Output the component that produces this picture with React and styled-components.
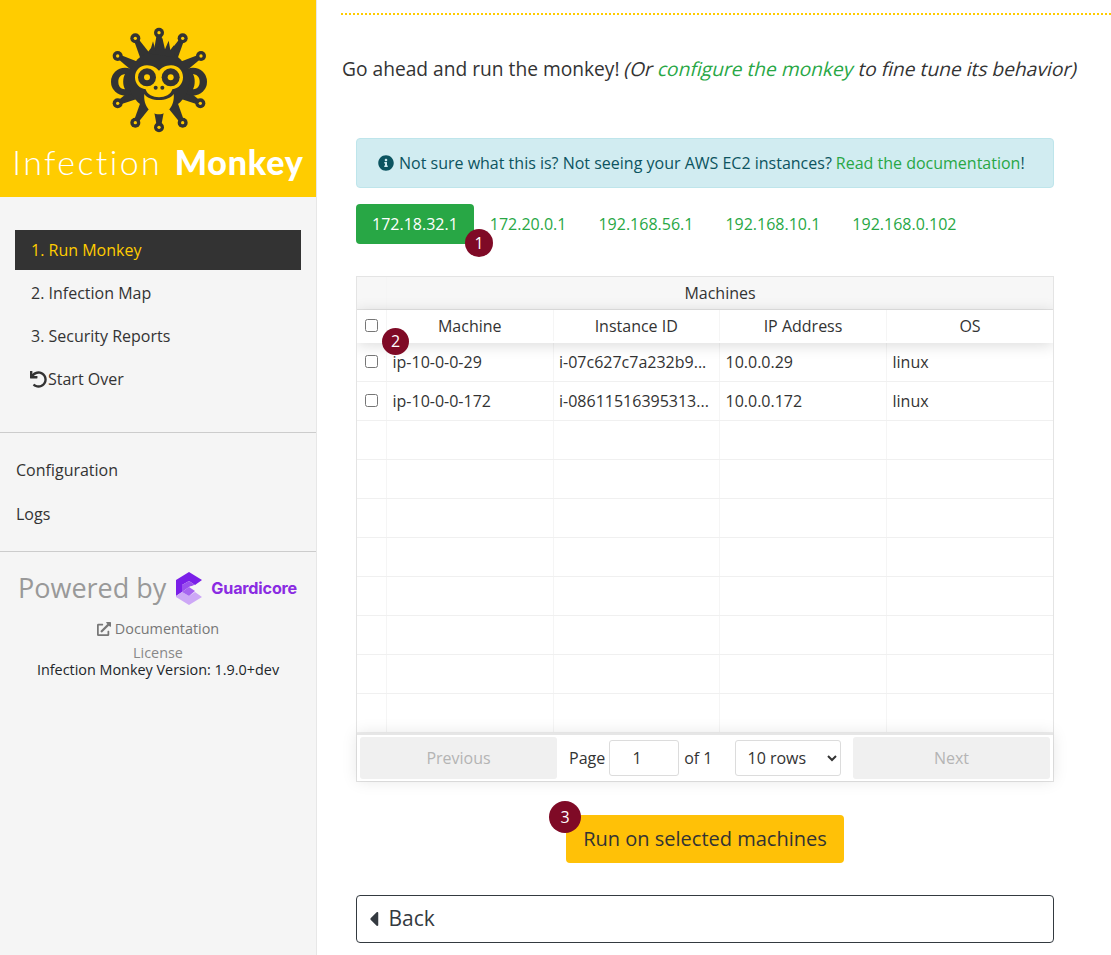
import React from "react";
import styled, { createGlobalStyle } from "styled-components";
import { FaCaretLeft, FaExternalLinkAlt, FaInfoCircle, FaUndo } from "react-icons/fa";

const GlobalStyle = createGlobalStyle`
  html, body {
    margin: 0;
    padding: 0;
    background: #fff;
    overflow: hidden;
  }
  body {
    font-family: "Open Sans", "Liberation Sans", sans-serif;
    font-size: 16px;
    line-height: 1.5;
    color: #212529;
  }
  * {
    box-sizing: border-box;
  }
`;

const Page = styled.div`
  width: 1111px;
  height: 955px;
  display: flex;
  overflow: hidden;
`;

const Sidebar = styled.aside`
  width: 317px;
  flex: none;
  background: #f5f5f5;
  border-right: 1px solid #e7e7e7;
  display: flex;
  flex-direction: column;
`;

const LogoPanel = styled.div`
  height: 197px;
  background: #ffcc00;
  display: flex;
  flex-direction: column;
  align-items: center;
  padding-top: 20px;
`;

const LogoText = styled.div`
  font-family: "Lato", "Open Sans", sans-serif;
  font-size: 34px;
  line-height: 40px;
  letter-spacing: 2.35px;
  margin-top: 2px;
  color: #fff;
  font-weight: 300;
  white-space: nowrap;

  b {
    font-weight: 900;
    letter-spacing: 0.8px;
    margin-left: 1px;
  }
`;

const Nav = styled.ul`
  list-style: none;
  margin: 33px 0 0 15px;
  padding: 0;
  width: 286px;
`;

const NavItem = styled.li`
  height: 40px;
  margin-bottom: 3px;
  padding-left: 16px;
  display: flex;
  align-items: center;
  background: ${(p) => (p.$active ? "#333" : "transparent")};
  color: ${(p) => (p.$active ? "#ffcc00" : "#333")};
`;

const UndoIcon = styled(FaUndo)`
  width: 17px;
  height: 17px;
  margin: 0 1px 0 -1px;
  color: #333;
`;

const Rule = styled.hr`
  border: 0;
  border-top: 1px solid #ccc;
  margin: ${(p) => p.$margin};
  width: 100%;
`;

const SideLink = styled.div`
  padding-left: 16px;
  height: 44px;
  display: flex;
  align-items: center;
  color: #333;
`;

const Powered = styled.div`
  margin-top: 13px;
  display: flex;
  align-items: center;
  padding-left: 18px;
  height: 46px;
  font-size: 27px;
  color: #999;
  white-space: nowrap;
`;

const GuardMark = styled.svg`
  width: 28px;
  height: 33px;
  margin-left: 9px;
  flex: none;
`;

const GuardName = styled.span`
  font-family: "Inter", "Open Sans", sans-serif;
  font-size: 16.2px;
  font-weight: 700;
  color: #8a2be2;
  margin-left: 8px;
  letter-spacing: -0.2px;
`;

const SideFooter = styled.div`
  text-align: center;
  font-size: 14.4px;
  line-height: 17px;
`;

const DocLink = styled.div`
  color: #777;
  margin-top: 7px;
  height: 26px;
  line-height: 22px;

  svg {
    width: 14px;
    height: 14px;
    vertical-align: -2px;
    margin-right: 4px;
    color: #777;
  }
`;

const License = styled.div`
  color: #888;
`;

const Main = styled.main`
  flex: 1;
  padding: 13px 0 0 24px;
  display: flex;
  flex-direction: column;
`;

const DottedRule = styled.div`
  border-top: 2px dotted #ffcc00;
  height: 2px;
`;

const Lead = styled.p`
  margin: 37px 0 0 1px;
  font-size: 19.2px;
  line-height: 34px;
  white-space: nowrap;
  color: #333;

  a {
    color: #28a745;
  }
`;

/* the reference slants the upright face instead of using the real italic */
const Slanted = styled.span`
  display: inline-block;
  transform: skewX(-14deg);
`;

const Content = styled.div`
  width: 698px;
  margin-left: 15px;
  display: flex;
  flex-direction: column;
`;

const Alert = styled.div`
  margin-top: 52px;
  height: 50px;
  background: #d1ecf1;
  border: 1px solid #bee5eb;
  border-radius: 4px;
  color: #0c5460;
  display: flex;
  align-items: center;
  padding-left: 21px;
  white-space: nowrap;

  svg {
    width: 16px;
    height: 16px;
    margin-right: 5px;
  }

  a {
    color: #28a745;
    margin-left: 4px;
  }
`;

const Tabs = styled.div`
  display: flex;
  margin-top: 16px;
  position: relative;
`;

const Tab = styled.div`
  height: 40px;
  padding: 0 16px;
  line-height: 40px;
  border-radius: 4px;
  background: ${(p) => (p.$active ? "#28a745" : "transparent")};
  color: ${(p) => (p.$active ? "#fff" : "#28a745")};
`;

const Badge = styled.span`
  position: absolute;
  left: ${(p) => p.$left}px;
  top: ${(p) => p.$top}px;
  width: ${(p) => p.$size}px;
  height: ${(p) => p.$size}px;
  border-radius: 50%;
  background: #7f0a26;
  color: #fff;
  font-size: 16px;
  line-height: ${(p) => p.$size}px;
  text-align: center;
  z-index: 3;
`;

const TableFrame = styled.div`
  margin-top: 32px;
  height: 506px;
  border: 1px solid #e4e4e4;
  display: flex;
  flex-direction: column;
  position: relative;
  font-size: 16px;
  color: #333;
`;

const TableBody = styled.div`
  flex: 1;
  min-height: 0;
  overflow: hidden;
  display: flex;
  flex-direction: column;
`;

const Row = styled.div`
  display: grid;
  grid-template-columns: 30px 166.5px 166.5px 167px 1fr;
  height: 39px;
  flex: none;
  border-bottom: 1px solid #f0f0f0;
`;

const GroupRow = styled(Row)`
  grid-template-columns: 30px 1fr;
  height: 33px;
  background: #f7f7f7;
  border-bottom: 1px solid #e4e4e4;
`;

const HeadRow = styled(Row)`
  height: 33px;
  border-bottom: 0;
  padding-bottom: 2px;
  box-shadow: 0 2px 15px rgba(0, 0, 0, 0.15);
  position: relative;
  z-index: 1;
  background: #fff;
`;

const Cell = styled.div`
  display: flex;
  align-items: center;
  padding: 0 ${(p) => (p.$center ? "0" : "5px 0 5.5px")};
  border-right: 1px solid #f5f5f5;
  justify-content: ${(p) => (p.$center ? "center" : "flex-start")};
  white-space: nowrap;
  overflow: hidden;

  &:last-child {
    border-right: 0;
  }
`;

const CheckCell = styled(Cell)`
  justify-content: center;
  padding: 0 1px 0 0;

  input {
    margin: 0 0 2px;
    width: 13px;
    height: 13px;
  }
`;

const HeadCheckCell = styled(CheckCell)`
  input {
    margin: 0;
  }
`;

const Pagination = styled.div`
  height: 48px;
  flex: none;
  background: #fff;
  display: flex;
  align-items: center;
  padding: 0 3px;
  box-shadow: 0 0 15px rgba(0, 0, 0, 0.1);
  border-top: 2px solid #e6e6e6;
  position: relative;
  z-index: 1;
`;

const PageButton = styled.div`
  width: 197px;
  height: 42px;
  flex: none;
  border-radius: 3px;
  background: #f0f0f0;
  color: #b4b4b4;
  text-align: center;
  line-height: 42px;
`;

const PageCenter = styled.div`
  flex: 1;
  display: flex;
  align-items: center;
  padding-left: 12px;
  white-space: nowrap;
`;

const PageInput = styled.input`
  width: 70px;
  height: 36px;
  margin: 0 5px 0 4px;
  border: 1px solid #dcdcdc;
  border-radius: 3px;
  font: inherit;
  color: #333;
  text-align: center;
  padding: 0 14px 0 0;
`;

const RowsSelect = styled.select`
  width: 106px;
  height: 36px;
  margin-left: 22px;
  border: 1px solid #dcdcdc;
  border-radius: 3px;
  background: #fff;
  font: inherit;
  color: #333;
  padding-left: 8px;
`;

const RunWrap = styled.div`
  display: flex;
  justify-content: center;
  margin-top: 33px;
`;

const RunButton = styled.div`
  position: relative;
  width: 278px;
  height: 48px;
  background: #ffc107;
  border-radius: 4px;
  font-size: 20px;
  line-height: 48px;
  text-align: center;
  color: #333;
`;

const BackButton = styled.div`
  margin-top: 32px;
  height: 48px;
  border: 1px solid #343a40;
  border-radius: 4px;
  display: flex;
  align-items: center;
  padding-left: 12px;
  font-size: 21px;
  color: #343a40;

  svg {
    width: 9.5px;
    height: 24px;
    margin-right: 10px;
  }
`;

const MonkeyLogo = () => {
  const cx = 204;
  const cy = 182;
  const arms = [
    [204, 38], [275, 55], [330, 108], [328, 250], [275, 308],
    [204, 322], [133, 308], [80, 250], [80, 108], [133, 55],
  ];
  return (
    <svg width="135" height="120" viewBox="0 0 405 360">
      {arms.map(([x, y]) => {
        const len = Math.hypot(x - cx, y - cy);
        const ux = (x - cx) / len;
        const uy = (y - cy) / len;
        const bx = cx + ux * 80;
        const by = cy + uy * 80;
        const pts = [
          [bx - uy * 17, by + ux * 17],
          [x - uy * 6, y + ux * 6],
          [x + uy * 6, y - ux * 6],
          [bx + uy * 17, by - ux * 17],
        ]
          .map((pt) => pt.join(","))
          .join(" ");
        return (
          <g key={x + "-" + y}>
            <polygon points={pts} fill="#333" />
            <circle cx={x} cy={y} r="15" fill="#333" />
            <circle cx={x} cy={y} r="5" fill="#ffcc00" />
          </g>
        );
      })}
      <circle cx="102" cy="185" r="42" fill="#333" />
      <circle cx="306" cy="185" r="42" fill="#333" />
      <path d="M102 162 C86 164 82 176 82 185 C82 196 86 206 102 208 C95 195 95 175 102 162Z" fill="#ffcc00" />
      <path d="M306 162 C322 164 326 176 326 185 C326 196 322 206 306 208 C313 195 313 175 306 162Z" fill="#ffcc00" />
      <circle cx="204" cy="182" r="91" fill="#333" />
      <polygon points="168,100 180,84 186,64 194,92 214,54 222,88 233,62 238,90 249,76 250,112" fill="#333" />
      <path
        d="M168 136 C186 136 197 145 204 152 C211 145 222 136 240 136 C262 136 276 152 276 172 C276 192 262 206 244 208 C240 224 222 232 204 232 C186 232 168 224 164 208 C146 206 132 192 132 172 C132 152 146 136 168 136Z"
        fill="#ffcc00"
      />
      <circle cx="168" cy="172" r="27" fill="#333" />
      <circle cx="239" cy="172" r="27" fill="#333" />
      <circle cx="168" cy="172" r="9" fill="#ffcc00" />
      <circle cx="239" cy="172" r="9" fill="#ffcc00" />
      <circle cx="194" cy="203" r="6" fill="#333" />
      <circle cx="214" cy="203" r="6" fill="#333" />
      <path d="M160 222 C176 246 232 246 248 222 C252 258 228 283 204 283 C180 283 156 258 160 222Z" fill="#ffcc00" />
    </svg>
  );
};

const GuardicoreMark = () => (
  <GuardMark viewBox="0 0 28 33">
    <polygon points="14,0 27,8 20,13 14,9 7,13 7,20 1,24 1,8" fill="#7a1fe8" />
    <polygon points="7,13 14,9 20,13 14,15 7,20" fill="#9a50ee" />
    <polygon points="14,15 20,13 27,16 20,19" fill="#f5f5f5" />
    <polygon points="1,24 7,20 14,24 20,20 27,25 14,33 1,25" fill="#cda8f6" />
    <polygon points="7,20 14,15 20,19 14,24" fill="#a665f0" />
  </GuardMark>
);

const ipList = ["172.18.32.1", "172.20.0.1", "192.168.56.1", "192.168.10.1", "192.168.0.102"];

const machines = [
  ["ip-10-0-0-29", "i-07c627c7a232b9...", "10.0.0.29", "linux"],
  ["ip-10-0-0-172", "i-08611516395313...", "10.0.0.172", "linux"],
];

const emptyRows = [0, 1, 2, 3, 4, 5, 6, 7];

export default function App() {
  return (
    <Page>
      <GlobalStyle />
      <Sidebar>
        <LogoPanel>
          <MonkeyLogo />
          <LogoText>
            Infection <b>Monkey</b>
          </LogoText>
        </LogoPanel>
        <Nav>
          <NavItem $active>1. Run Monkey</NavItem>
          <NavItem>2. Infection Map</NavItem>
          <NavItem>3. Security Reports</NavItem>
          <NavItem>
            <UndoIcon />
            Start Over
          </NavItem>
        </Nav>
        <Rule $margin="30px 0 15px" />
        <SideLink>Configuration</SideLink>
        <SideLink>Logs</SideLink>
        <Rule $margin="15px 0 0" />
        <Powered>
          Powered by
          <GuardicoreMark />
          <GuardName>Guardicore</GuardName>
        </Powered>
        <SideFooter>
          <DocLink>
            <FaExternalLinkAlt />
            Documentation
          </DocLink>
          <License>License</License>
          <div>Infection Monkey Version: 1.9.0+dev</div>
        </SideFooter>
      </Sidebar>
      <Main>
        <DottedRule />
        <Lead>
          Go ahead and run the monkey! <Slanted>(Or <a>configure the monkey</a> to fine tune its behavior)</Slanted>
        </Lead>
        <Content>
          <Alert>
            <FaInfoCircle />
            Not sure what this is? Not seeing your AWS EC2 instances?<a>Read the documentation</a>!
          </Alert>
          <Tabs>
            {ipList.map((ip, i) => (
              <Tab key={ip} $active={i === 0}>
                {ip}
              </Tab>
            ))}
            <Badge $left={109} $top={25} $size={28}>1</Badge>
          </Tabs>
          <TableFrame>
            <Badge $left={25} $top={51} $size={27}>2</Badge>
            <TableBody>
              <GroupRow>
                <Cell />
                <Cell $center>Machines</Cell>
              </GroupRow>
              <HeadRow>
                <HeadCheckCell>
                  <input type="checkbox" />
                </HeadCheckCell>
                <Cell $center>Machine</Cell>
                <Cell $center>Instance ID</Cell>
                <Cell $center>IP Address</Cell>
                <Cell $center>OS</Cell>
              </HeadRow>
              {machines.map((m) => (
                <Row key={m[0]}>
                  <CheckCell>
                    <input type="checkbox" />
                  </CheckCell>
                  {m.map((v) => (
                    <Cell key={v}>{v}</Cell>
                  ))}
                </Row>
              ))}
              {emptyRows.map((n) => (
                <Row key={n}>
                  <Cell />
                  <Cell />
                  <Cell />
                  <Cell />
                  <Cell />
                </Row>
              ))}
            </TableBody>
            <Pagination>
              <PageButton>Previous</PageButton>
              <PageCenter>
                Page
                <PageInput defaultValue="1" />
                of 1
                <RowsSelect defaultValue="10">
                  <option value="10">10 rows</option>
                </RowsSelect>
              </PageCenter>
              <PageButton>Next</PageButton>
            </Pagination>
          </TableFrame>
          <RunWrap>
            <RunButton>
              <Badge $left={-17} $top={-14} $size={32}>3</Badge>
              Run on selected machines
            </RunButton>
          </RunWrap>
          <BackButton>
            <FaCaretLeft />
            Back
          </BackButton>
        </Content>
      </Main>
    </Page>
  );
}
